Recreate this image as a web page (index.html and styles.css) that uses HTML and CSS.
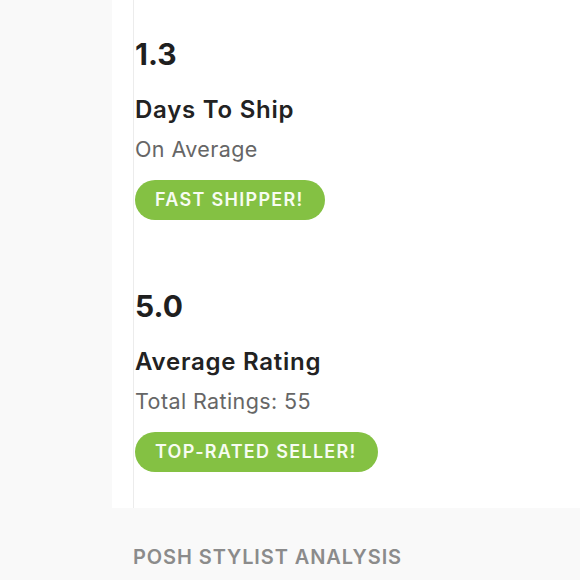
FILE: index.html
```html
<!DOCTYPE html>
<html>
<head>
<meta charset="utf-8">
<link rel="stylesheet" href="styles.css">
</head>
<body>
<div class="panel">
  <div class="stats">
    <div class="stat">
      <div class="value">1.3</div>
      <div class="label">Days To Ship</div>
      <div class="sub">On Average</div>
      <div class="badge">FAST SHIPPER!</div>
    </div>
    <div class="stat second">
      <div class="value">5.0</div>
      <div class="label">Average Rating</div>
      <div class="sub">Total Ratings: 55</div>
      <div class="badge">TOP-RATED SELLER!</div>
    </div>
  </div>
</div>
<div class="section-title">POSH STYLIST ANALYSIS</div>
</body>
</html>
```
FILE: styles.css
```css
html, body {
  margin: 0;
  padding: 0;
  background: #f9f9f9;
  font-family: Inter, Lato, sans-serif;
}
.panel {
  margin-left: 112px;
  background: #fff;
  padding-left: 21px;
  height: 508px;
  box-sizing: border-box;
}
.stats {
  border-left: 1px solid #ececec;
  height: 100%;
  padding-left: 1px;
  padding-top: 36px;
  box-sizing: border-box;
}
.stat.second {
  margin-top: 68px;
}
.value {
  font-size: 30px;
  font-weight: 700;
  color: #1f1f1f;
  line-height: 36px;
}
.label {
  font-size: 24px;
  font-weight: 600;
  color: #222;
  line-height: 30px;
  margin-top: 23px;
  letter-spacing: 0.75px;
}
.sub {
  font-size: 21.5px;
  font-weight: 400;
  color: #666;
  line-height: 28px;
  margin-top: 10px;
  letter-spacing: 0.4px;
}
.badge {
  display: inline-block;
  margin-top: 17px;
  background: #84c143;
  color: #f7fcf2;
  font-size: 18px;
  font-weight: 600;
  letter-spacing: 1.3px;
  line-height: 40px;
  height: 40px;
  padding: 0 21px 0 20px;
  border-radius: 20px;
}
.section-title {
  padding: 37px 0 0 133px;
  font-size: 20px;
  font-weight: 600;
  color: #8b8b8b;
  letter-spacing: 0.9px;
}
```
